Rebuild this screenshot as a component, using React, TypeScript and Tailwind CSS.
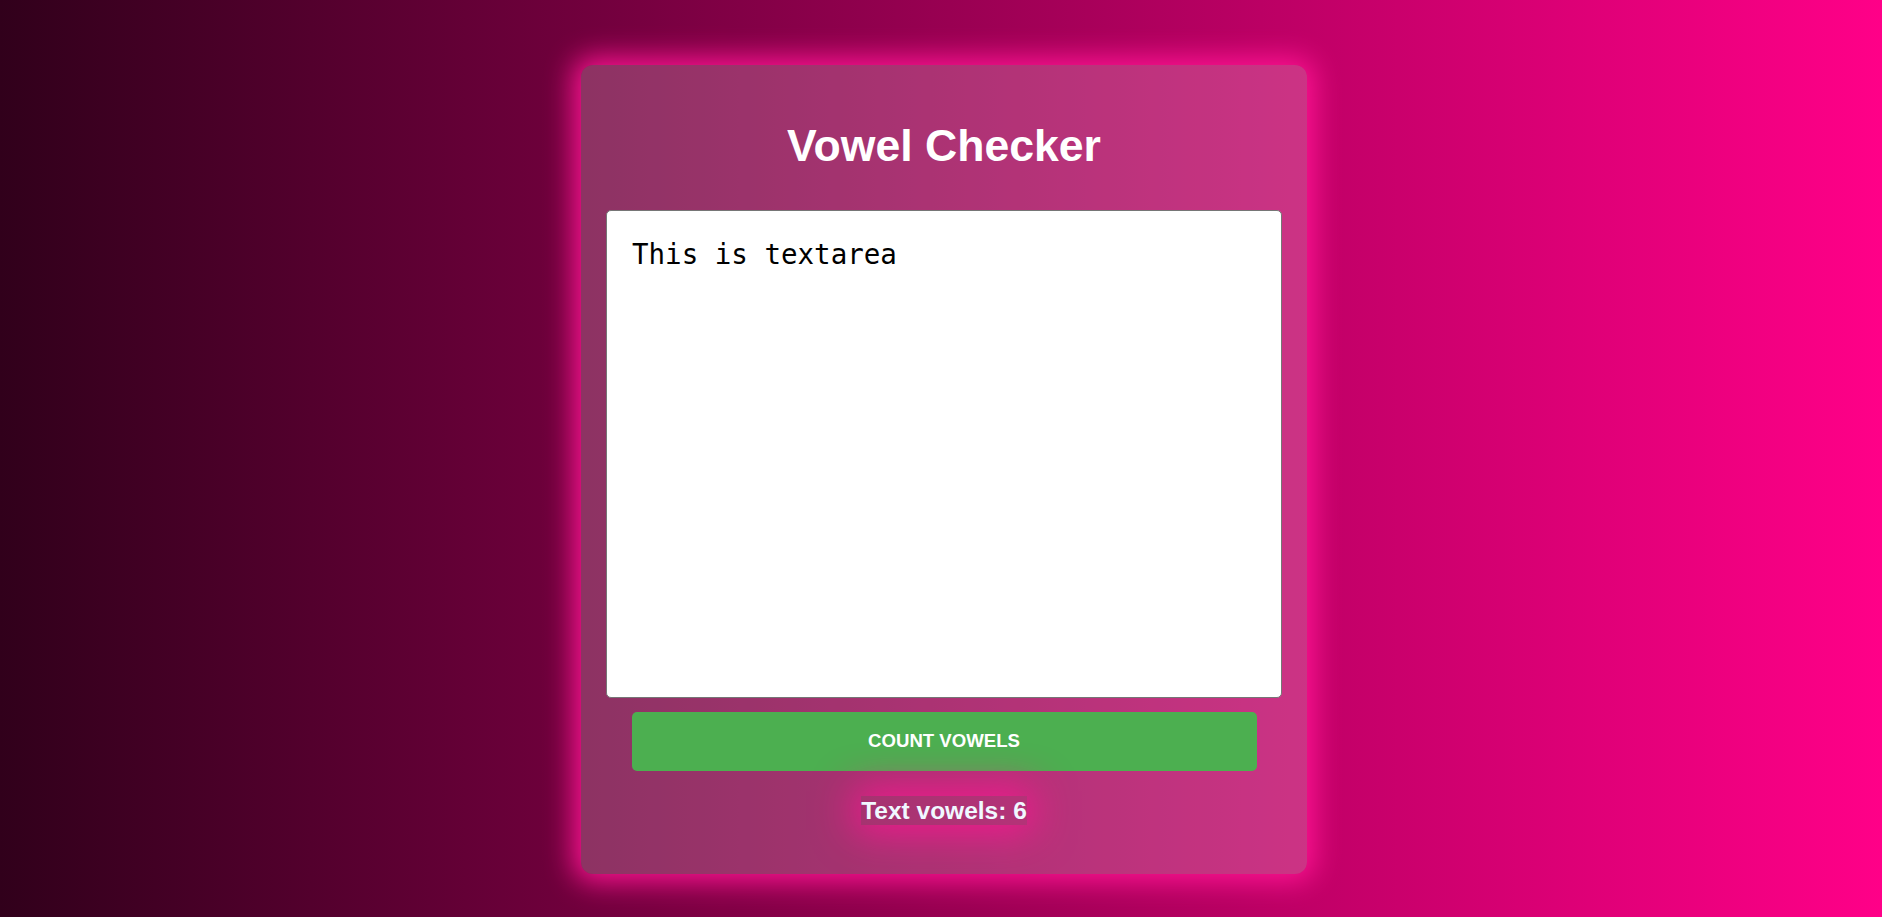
import React, { useState } from "react";

export default function App() {
  const [text, setText] = useState("This is textarea");
  const [count, setCount] = useState(6);
  const countVowels = () => {
    const m = text.match(/[aeiou]/gi);
    setCount(m ? m.length : 0);
  };
  return (
    <div
      className="w-full h-[917px] overflow-hidden flex justify-center pt-[65px] pl-[6px] bg-[linear-gradient(to_right,#31001b,#ff0088)]"
      style={{ fontFamily: '"Liberation Sans", Arial, sans-serif' }}
    >
      <div className="w-[726px] h-[809px] rounded-[12px] bg-[rgba(255,255,255,0.2)] shadow-[0_0_28px_8px_rgba(255,20,147,0.95)] px-[25px] pt-[56px] pb-[49px] flex flex-col items-center">
        <h1 className="text-[44.6px] font-bold text-white leading-[50.6px] m-0 mb-[38px]">
          Vowel Checker
        </h1>
        <textarea
          value={text}
          onChange={(e) => setText(e.target.value)}
          spellCheck={true}
          className="w-[676px] h-[488px] shrink-0 resize-none bg-white text-black border border-[#767676] rounded-[5px] pt-[28px] pl-[25px] pr-[20px] text-[27.5px] leading-[31.4px] outline-none"
          style={{ fontFamily: '"DejaVu Sans Mono", "Liberation Mono", monospace' }}
        />
        <button
          onClick={countVowels}
          className="mt-[14px] w-[625px] h-[59px] shrink-0 bg-[#4caf50] text-white font-bold uppercase text-[18.6px] rounded-[5px] cursor-pointer"
        >
          Count Vowels
        </button>
        <span className="mt-[25px] inline-block h-[29px] leading-[29px] text-[24.5px] font-bold text-[#f0f8ff] shadow-[0_0_40px_6px_rgba(255,20,147,0.9)]">
          Text vowels: {count}
        </span>
      </div>
    </div>
  );
}
